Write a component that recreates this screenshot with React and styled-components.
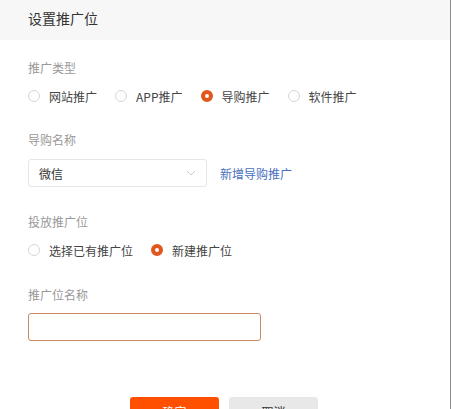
import React from 'react'
import styled, { createGlobalStyle } from 'styled-components'

const Global = createGlobalStyle`
  html, body { margin: 0; padding: 0; background: #fff; }
  body { font-family: "Noto Sans CJK SC", "Liberation Sans", sans-serif; }
`

const Dialog = styled.div`
  width: 451px;
  height: 409px;
  box-sizing: border-box;
  border-right: 1px solid #8c8c8c;
  overflow: hidden;
  background: #fff;
`

const Header = styled.div`
  height: 40px;
  background: #f7f7f7;
  padding: 0 28px;
  display: flex;
  align-items: center;
  font-size: 14px;
  color: #333;
  padding-bottom: 4px;
  box-sizing: border-box;
`

const Body = styled.div`
  padding: 20px 28px 0;
  display: flex;
  flex-direction: column;
`

const Field = styled.div`
  display: flex;
  flex-direction: column;
  gap: ${p => p.$gap || 10}px;
  margin-bottom: ${p => p.$mb || 0}px;
`

const Label = styled.div`
  font-size: 12px;
  line-height: 16px;
  color: #999;
`

const RadioRow = styled.div`
  display: flex;
  align-items: center;
  gap: 18px;
  height: 20px;
`

const RadioItem = styled.label`
  display: flex;
  align-items: center;
  gap: 9px;
  font-size: 12px;
  color: #444;
`

const Dot = styled.span`
  width: 12px;
  height: 12px;
  border-radius: 50%;
  box-sizing: border-box;
  border: ${p => (p.$on ? '4px solid #e0561c' : '1px solid #d6d6d6')};
  background: #fff;
`

const Inline = styled.div`
  display: flex;
  align-items: center;
  gap: 13px;
`

const Select = styled.div`
  width: 179px;
  height: 28px;
  box-sizing: border-box;
  border: 1px solid #e6e6e6;
  border-radius: 3px;
  display: flex;
  align-items: center;
  justify-content: space-between;
  padding: 0 10px;
  font-size: 12px;
  color: #333;
`

const Link = styled.a`
  font-size: 12px;
  color: #4a6fc1;
  text-decoration: none;
`

const Input = styled.input`
  width: 233px;
  height: 28px;
  box-sizing: border-box;
  border: 1px solid #c98a63;
  border-radius: 3px;
  outline: none;
  padding: 0 8px;
`

const Footer = styled.div`
  display: flex;
  gap: 10px;
  padding-left: 130px;
  margin-top: 56px;
`

const Button = styled.button`
  width: 89px;
  height: 28px;
  border-radius: 3px;
  border: none;
  font-family: inherit;
  font-size: 12px;
  background: ${p => (p.$primary ? '#ff5000' : '#e8e8e8')};
  color: ${p => (p.$primary ? '#fff' : '#333')};
`

function Radio({ on, children }) {
  return (
    <RadioItem>
      <Dot $on={on} />
      {children}
    </RadioItem>
  )
}

export default function App() {
  return (
    <Dialog>
      <Global />
      <Header>设置推广位</Header>
      <Body>
        <Field $mb={26}>
          <Label>推广类型</Label>
          <RadioRow>
            <Radio>网站推广</Radio>
            <Radio>APP推广</Radio>
            <Radio on>导购推广</Radio>
            <Radio>软件推广</Radio>
          </RadioRow>
        </Field>
        <Field $mb={27} $gap={11}>
          <Label>导购名称</Label>
          <Inline>
            <Select>
              微信
              <svg width="10" height="6" viewBox="0 0 10 6">
                <path d="M1 1l4 4 4-4" fill="none" stroke="#ccc" strokeWidth="1" />
              </svg>
            </Select>
            <Link href="#">新增导购推广</Link>
          </Inline>
        </Field>
        <Field $mb={27}>
          <Label>投放推广位</Label>
          <RadioRow>
            <Radio>选择已有推广位</Radio>
            <Radio on>新建推广位</Radio>
          </RadioRow>
        </Field>
        <Field>
          <Label>推广位名称</Label>
          <Input />
        </Field>
      </Body>
      <Footer>
        <Button $primary>确定</Button>
        <Button>取消</Button>
      </Footer>
    </Dialog>
  )
}
